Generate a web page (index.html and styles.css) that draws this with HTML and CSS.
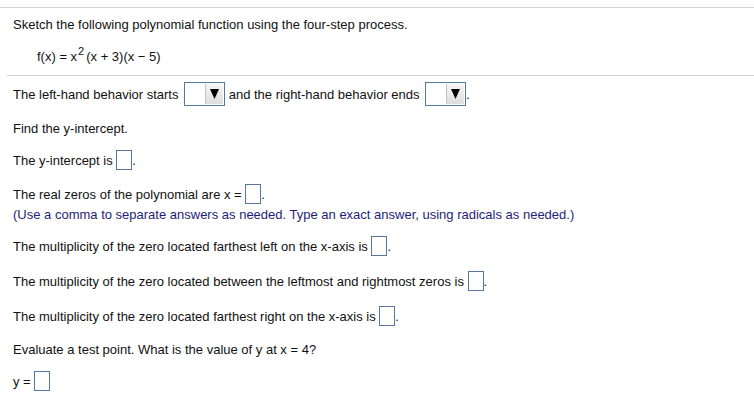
FILE: index.html
```html
<!DOCTYPE html>
<html>
<head>
<meta charset="utf-8">
<link rel="stylesheet" href="styles.css">
</head>
<body>
<div class="page">
  <section class="intro">
    <p class="row">Sketch the following polynomial function using the four-step process.</p>
    <p class="row formula">f(x) = x<sup>2</sup>(x + 3)(x − 5)</p>
  </section>
  <section class="work">
    <p class="row first">The left-hand behavior starts <span class="select"><span class="btn"><svg width="9" height="10" viewBox="0 0 9 10"><polygon points="0,0 9,0 4.5,10" fill="#000"/></svg></span></span> and the right-hand behavior ends <span class="select"><span class="btn"><svg width="9" height="10" viewBox="0 0 9 10"><polygon points="0,0 9,0 4.5,10" fill="#000"/></svg></span></span>.</p>
    <p class="row g13">Find the y-intercept.</p>
    <p class="row g12">The y-intercept is <span class="box"></span>.</p>
    <p class="row g14">The real zeros of the polynomial are x = <span class="box"></span>.<br><span class="note">(Use a comma to separate answers as needed. Type an exact answer, using radicals as needed.)</span></p>
    <p class="row g12">The multiplicity of the zero located farthest left on the x-axis is <span class="box"></span>.</p>
    <p class="row g15">The multiplicity of the zero located between the leftmost and rightmost zeros is <span class="box"></span>.</p>
    <p class="row g15">The multiplicity of the zero located farthest right on the x-axis is <span class="box"></span>.</p>
    <p class="row g13">Evaluate a test point. What is the value of y at x = 4?</p>
    <p class="row g12">y = <span class="box"></span></p>
  </section>
</div>
</body>
</html>
```
FILE: styles.css
```css
html, body {
  margin: 0;
  padding: 0;
  background: #fff;
}
body {
  font-family: "Liberation Sans", Arial, sans-serif;
  font-size: 13px;
  color: #111;
}
.page {
  padding-top: 7px;
}
.intro {
  border-top: 1px solid #d4d4d4;
  padding: 7px 0 8px 13px;
}
.row {
  margin: 0;
  line-height: 20px;
}
.formula {
  margin-top: 12px;
  padding-left: 24px;
}
.formula sup {
  font-size: 11px;
  line-height: 0;
  vertical-align: 6px;
  margin-left: 1px;
  margin-right: 2px;
}
.work {
  margin-left: 7px;
  border-top: 1px solid #d4d4d4;
  padding: 9px 0 0 6px;
}
.g12 { margin-top: 12px; }
.g13 { margin-top: 13px; }
.g14 { margin-top: 14px; }
.g15 { margin-top: 15px; }
.note {
  color: #1e1e78;
}
.box {
  display: inline-block;
  width: 14px;
  height: 18px;
  border: 1px solid #5577a0;
  vertical-align: middle;
  margin-top: -3px;
  background: #fff;
}
.select {
  display: inline-block;
  position: relative;
  width: 39px;
  height: 22px;
  border: 1px solid #5577a0;
  vertical-align: middle;
  margin: -4px 0 0 2px;
  background: #fff;
}
.btn {
  position: absolute;
  right: 1px;
  top: 1px;
  width: 17px;
  height: 20px;
  background: linear-gradient(#f6f6f6, #dedede);
  border-left: 1px solid #c4c4c4;
  display: flex;
  align-items: center;
  justify-content: center;
}
.btn svg {
  display: block;
}
```
